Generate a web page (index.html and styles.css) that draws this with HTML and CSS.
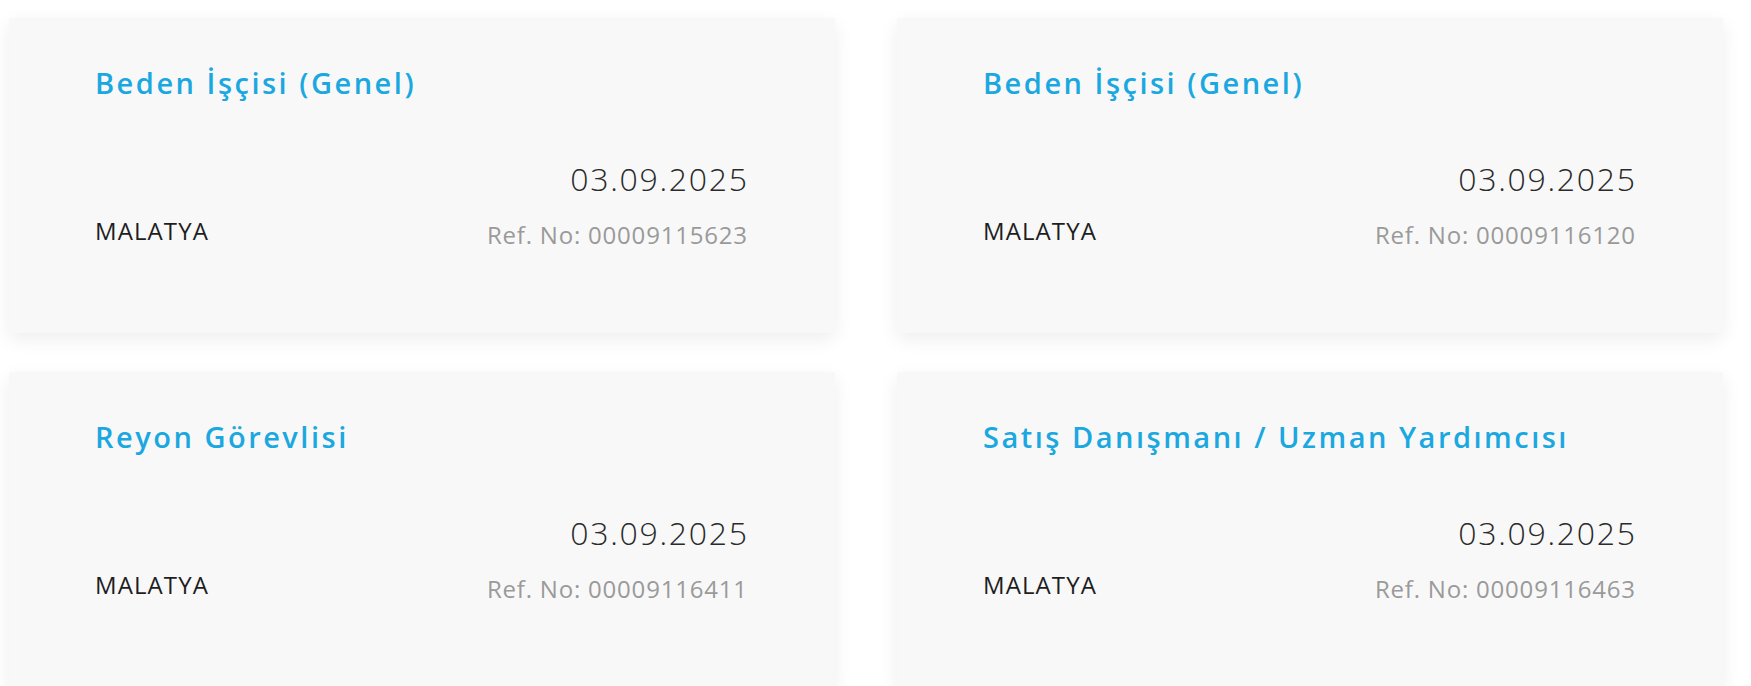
FILE: index.html
```html
<!DOCTYPE html>
<html lang="tr">
<head>
<meta charset="utf-8">
<title>İlanlar</title>
<link rel="stylesheet" href="styles.css">
</head>
<body>
<div class="grid">
  <div class="card">
    <h3 class="title">Beden İşçisi (Genel)</h3>
    <div class="meta">
      <div class="city">MALATYA</div>
      <div class="right">
        <div class="date">03.09.2025</div>
        <div class="ref">Ref. No: 00009115623</div>
      </div>
    </div>
  </div>
  <div class="card">
    <h3 class="title">Beden İşçisi (Genel)</h3>
    <div class="meta">
      <div class="city">MALATYA</div>
      <div class="right">
        <div class="date">03.09.2025</div>
        <div class="ref">Ref. No: 00009116120</div>
      </div>
    </div>
  </div>
  <div class="card">
    <h3 class="title">Reyon Görevlisi</h3>
    <div class="meta">
      <div class="city">MALATYA</div>
      <div class="right">
        <div class="date">03.09.2025</div>
        <div class="ref">Ref. No: 00009116411</div>
      </div>
    </div>
  </div>
  <div class="card">
    <h3 class="title">Satış Danışmanı / Uzman Yardımcısı</h3>
    <div class="meta">
      <div class="city">MALATYA</div>
      <div class="right">
        <div class="date">03.09.2025</div>
        <div class="ref">Ref. No: 00009116463</div>
      </div>
    </div>
  </div>
</div>
</body>
</html>
```
FILE: styles.css
```css
html, body {
  margin: 0;
  padding: 0;
  background: #ffffff;
}
body {
  font-family: "Open Sans", "Noto Sans", sans-serif;
}
.grid {
  display: grid;
  grid-template-columns: 826px 826px;
  column-gap: 62px;
  row-gap: 39px;
  padding: 18px 0 0 9px;
}
.card {
  background: #f8f8f8;
  height: 315px;
  box-sizing: border-box;
  padding: 0 88px 0 86px;
  box-shadow: 0 6px 18px rgba(0, 0, 0, 0.07);
}
.title {
  margin: 0;
  padding-top: 45px;
  font-size: 29px;
  line-height: 40px;
  font-weight: 600;
  letter-spacing: 2.5px;
  color: #1ba8e0;
}
.meta {
  display: flex;
  justify-content: space-between;
  align-items: flex-end;
  margin-top: 55px;
}
.city {
  font-size: 24px;
  line-height: 30px;
  letter-spacing: 1.1px;
  color: #1e1e1e;
  margin-bottom: 4px;
}
.right {
  text-align: right;
}
.date {
  font-size: 32px;
  line-height: 42px;
  font-weight: 300;
  letter-spacing: 1.7px;
  margin-right: -1.7px;
  color: #2a2a2a;
}
.ref {
  font-size: 24px;
  line-height: 30px;
  letter-spacing: 0.8px;
  margin-right: -0.8px;
  color: #9a9a9a;
  margin-top: 20px;
}
```
